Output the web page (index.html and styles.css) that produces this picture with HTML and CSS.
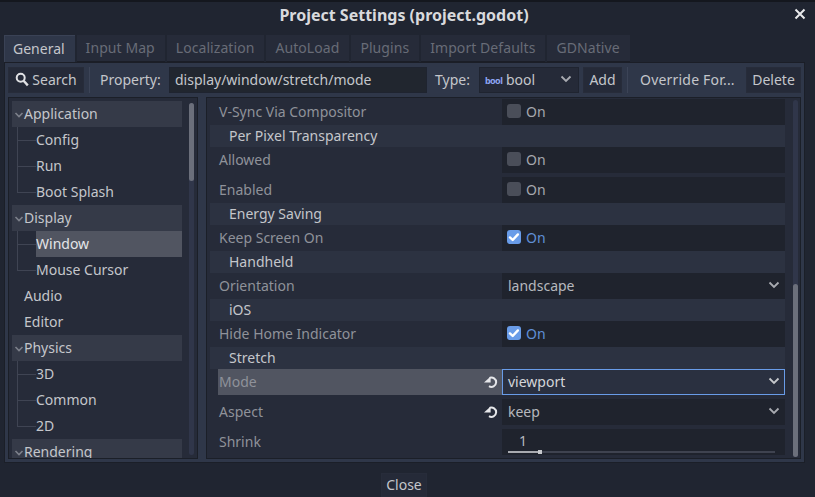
FILE: index.html
```html
<!DOCTYPE html>
<html lang="en">
<head>
<meta charset="utf-8">
<title>Project Settings</title>
<link rel="stylesheet" href="styles.css">
</head>
<body>
<div class="window">
  <header class="titlebar">
    <span class="title">Project Settings (project.godot)</span>
    <svg class="close-x" width="12" height="12" viewBox="0 0 12 12"><path d="M1.5 1.5l9 9M10.5 1.5l-9 9" stroke="#e8e9eb" stroke-width="2" fill="none"/></svg>
  </header>
  <nav class="tabs">
    <span class="tab active">General</span>
    <span class="tab">Input Map</span>
    <span class="tab">Localization</span>
    <span class="tab">AutoLoad</span>
    <span class="tab">Plugins</span>
    <span class="tab">Import Defaults</span>
    <span class="tab">GDNative</span>
  </nav>
  <main class="panel">
    <div class="toolbar">
      <button class="btn btn-search">
        <svg width="14" height="15" viewBox="0 0 14 15"><circle cx="5.7" cy="5.7" r="4" stroke="#e0e1e4" stroke-width="2" fill="none"/><path d="M8.6 8.8l4.2 4.6" stroke="#e0e1e4" stroke-width="2.4" fill="none"/></svg>
        <span>Search</span>
      </button>
      <span class="sep sep-a"></span>
      <label class="lbl lbl-prop">Property:</label>
      <span class="field field-prop">display/window/stretch/mode</span>
      <label class="lbl lbl-type">Type:</label>
      <span class="field field-type">
        <span class="bool-icon">bool</span>
        <span class="type-text">bool</span>
        <svg class="chev" width="12" height="8" viewBox="0 0 12 8"><path d="M1.5 1.5L6 6l4.5-4.5" stroke="#a9abb1" stroke-width="1.8" fill="none"/></svg>
      </span>
      <button class="btn btn-add">Add</button>
      <span class="sep sep-b"></span>
      <span class="lbl lbl-override">Override For...</span>
      <button class="btn btn-delete">Delete</button>
    </div>
    <div class="content">
      <aside class="tree">
        <div class="tree-items">
          <div class="t-head"><svg class="t-arrow" width="10" height="6" viewBox="0 0 10 6"><path d="M1.5 1L5 4.5 8.5 1" stroke="#7d818b" stroke-width="1.6" fill="none"/></svg>Application</div>
          <div class="t-kids">
            <div class="t-kid">Config</div>
            <div class="t-kid">Run</div>
            <div class="t-kid">Boot Splash</div>
          </div>
          <div class="t-head"><svg class="t-arrow" width="10" height="6" viewBox="0 0 10 6"><path d="M1.5 1L5 4.5 8.5 1" stroke="#7d818b" stroke-width="1.6" fill="none"/></svg>Display</div>
          <div class="t-kids">
            <div class="t-kid selected">Window</div>
            <div class="t-kid">Mouse Cursor</div>
          </div>
          <div class="t-leaf">Audio</div>
          <div class="t-leaf">Editor</div>
          <div class="t-head"><svg class="t-arrow" width="10" height="6" viewBox="0 0 10 6"><path d="M1.5 1L5 4.5 8.5 1" stroke="#7d818b" stroke-width="1.6" fill="none"/></svg>Physics</div>
          <div class="t-kids">
            <div class="t-kid">3D</div>
            <div class="t-kid">Common</div>
            <div class="t-kid">2D</div>
          </div>
          <div class="t-head"><svg class="t-arrow" width="10" height="6" viewBox="0 0 10 6"><path d="M1.5 1L5 4.5 8.5 1" stroke="#7d818b" stroke-width="1.6" fill="none"/></svg>Rendering</div>
        </div>
        <div class="vbar vbar-tree"><div class="grab grab-tree"></div></div>
      </aside>
      <section class="props">
        <div class="prop-list">
          <div class="row"><span class="name">V-Sync Via Compositor</span><div class="val check"><span class="box"></span><span>On</span></div></div>
          <div class="sect">Per Pixel Transparency</div>
          <div class="row"><span class="name">Allowed</span><div class="val check"><span class="box"></span><span>On</span></div></div>
          <div class="row gap"><span class="name">Enabled</span><div class="val check"><span class="box"></span><span>On</span></div></div>
          <div class="sect">Energy Saving</div>
          <div class="row"><span class="name">Keep Screen On</span><div class="val check on"><span class="box"><svg width="14" height="14" viewBox="0 0 14 14"><path d="M3 7.4l2.7 2.6 5.2-5.6" stroke="#fff" stroke-width="2.4" fill="none" stroke-linecap="round" stroke-linejoin="round"/></svg></span><span>On</span></div></div>
          <div class="sect">Handheld</div>
          <div class="row"><span class="name">Orientation</span><div class="val select"><span>landscape</span><svg class="chev" width="12" height="8" viewBox="0 0 12 8"><path d="M1.5 1.5L6 6l4.5-4.5" stroke="#a9abb1" stroke-width="1.8" fill="none"/></svg></div></div>
          <div class="sect">iOS</div>
          <div class="row"><span class="name">Hide Home Indicator</span><div class="val check on"><span class="box"><svg width="14" height="14" viewBox="0 0 14 14"><path d="M3 7.4l2.7 2.6 5.2-5.6" stroke="#fff" stroke-width="2.4" fill="none" stroke-linecap="round" stroke-linejoin="round"/></svg></span><span>On</span></div></div>
          <div class="sect">Stretch</div>
          <div class="row hover"><span class="name">Mode</span>
            <svg class="revert" width="14" height="12" viewBox="0 0 14 12"><path d="M5.5 1.9A4.7 4.7 0 1 1 5 10.2" stroke="#e6e7ea" stroke-width="2" fill="none"/><path d="M0 6.6h6.6V.4z" fill="#e6e7ea"/></svg>
            <div class="val select focus"><span>viewport</span><svg class="chev" width="12" height="8" viewBox="0 0 12 8"><path d="M1.5 1.5L6 6l4.5-4.5" stroke="#c6c8cc" stroke-width="1.8" fill="none"/></svg></div></div>
          <div class="row gap"><span class="name">Aspect</span>
            <svg class="revert" width="14" height="12" viewBox="0 0 14 12"><path d="M5.5 1.9A4.7 4.7 0 1 1 5 10.2" stroke="#e6e7ea" stroke-width="2" fill="none"/><path d="M0 6.6h6.6V.4z" fill="#e6e7ea"/></svg>
            <div class="val select"><span>keep</span><svg class="chev" width="12" height="8" viewBox="0 0 12 8"><path d="M1.5 1.5L6 6l4.5-4.5" stroke="#a9abb1" stroke-width="1.8" fill="none"/></svg></div></div>
          <div class="row gap"><span class="name">Shrink</span><div class="val range"><span class="range-num">1</span><div class="track"><div class="fill"></div><div class="knob"></div></div></div></div>
        </div>
        <div class="vbar vbar-props"><div class="grab grab-props"></div></div>
      </section>
    </div>
  </main>
  <footer class="footer"><button class="btn btn-close">Close</button></footer>
</div>
</body>
</html>
```
FILE: styles.css
```css
* { box-sizing: border-box; }
html, body { margin: 0; padding: 0; }
body {
  width: 815px; height: 497px; overflow: hidden;
  background: #202531;
  font-family: "Noto Sans", sans-serif; font-size: 14px; color: #c4c6cb;
}
.window { height: 497px; display: flex; flex-direction: column; border-top: 2px solid #14171e; }
button { font: inherit; color: inherit; border: 0; padding: 0; }

.titlebar { height: 33px; flex: none; display: flex; align-items: center; justify-content: center; position: relative; padding: 0 7px 8px 0; }
.title { font-weight: 700; font-size: 16px; color: #d9dadd; }
.close-x { position: absolute; left: 794px; top: 6px; }

.tabs { flex: none; height: 27px; display: flex; margin-left: 4px; gap: 2px; }
.tab { padding: 0 10px 0 9px; line-height: 25px; background: #262b39; color: #686c77; border-bottom: 1px solid #1b1e27; letter-spacing: 0.07px; }
.tab.active { background: #2f3749; color: #c4c6cb; border-bottom: 0; border-top: 1px solid #3a4255; border-left: 1px solid #3a4255; padding-left: 8px; letter-spacing: 0; }

.panel { flex: none; height: 401px; width: 801px; margin-left: 4px; padding: 4px 3px 3px; background: #2f3749; border: 1px solid #1b1f28; border-top-color: #1b1e27; }

.toolbar { height: 26px; display: flex; align-items: center; }
.btn { background: #252a38; height: 26px; display: inline-flex; align-items: center; justify-content: center; border: 1px solid #272c3a; color: #c4c6cb; padding-bottom: 2px; }
.btn-search { width: 76px; gap: 3px; }
.sep { width: 1px; height: 26px; background: #3c4457; flex: none; }
.sep-a { margin-left: 5px; }
.lbl { color: #c4c6cb; white-space: nowrap; padding-bottom: 2px; }
.lbl-prop { margin-left: 10px; width: 69px; }
.field { height: 26px; background: #21262f; display: flex; align-items: center; border: 1px solid #1f2430; padding-bottom: 2px; }
.field-prop { width: 258px; padding-left: 5px; }
.lbl-type { margin-left: 8px; width: 44px; }
.field-type { width: 100px; padding-left: 5px; position: relative; background: #252a38; }
.bool-icon { font-size: 9px; font-weight: 700; letter-spacing: -0.6px; color: #8da5f3; width: 17px; margin-top: 2px; }
.type-text { margin-left: 4px; }
.field-type .chev { margin-left: auto; margin-right: 6px; }
.btn-add { width: 39px; margin-left: 4px; }
.sep-b { margin-left: 5px; }
.lbl-override { margin-left: 12px; width: 106px; letter-spacing: 0.2px; }
.btn-delete { width: 55px; }

.content { height: 362px; margin-top: 4px; display: flex; gap: 8px; }

.tree { width: 190px; flex: none; background: #262b39; border: 1px solid #1b1f28; padding: 3px 4px 0 3px; display: flex; overflow: hidden; position: relative; }
.tree-items { width: 170px; height: 358px; overflow: hidden; flex: none; }
.t-head { height: 26px; line-height: 25px; background: #353a48; padding-left: 12px; position: relative; }
.t-arrow { position: absolute; left: 2px; top: 11px; }
.t-leaf { height: 26px; line-height: 25px; padding-left: 12px; }
.t-kids { position: relative; }
.t-kids::before { content: ""; position: absolute; left: 5px; top: 0; bottom: 13px; width: 1px; background: #3f4453; }
.t-kid { height: 26px; line-height: 25px; margin-left: 24px; position: relative; }
.t-kid::before { content: ""; position: absolute; left: -19px; top: 13px; width: 19px; height: 1px; background: #3f4453; }
.t-kid.selected { background: #515561; color: #e4e5e8; }

.vbar { flex: none; width: 5px; border-radius: 3px; background: #30364a; position: relative; }
.vbar-tree { margin-left: 7px; height: 352px; margin-top: 2px; }
.grab { position: absolute; left: 0; width: 5px; border-radius: 3px; background: #6b6f7b; }
.grab-tree { top: 0; height: 78px; }

.props { flex: 1; background: #262b39; border: 1px solid #1b1f28; padding: 1px 0 0 3px; display: flex; overflow: hidden; }
.prop-list { width: 575px; flex: none; }
.row { height: 26px; margin-left: 8px; display: flex; align-items: center; position: relative; }
.row.gap { margin-top: 4px; }
.row.hover { background: #515561; }
.name { flex: 1; padding-left: 1px; padding-bottom: 2px; color: #8f929a; }
.sect { height: 22px; line-height: 21px; background: #2c3241; padding-left: 19px; color: #c4c6cb; }
.val { width: 283px; height: 26px; flex: none; background: #1f232d; display: flex; align-items: center; padding-bottom: 2px; }
.revert { margin-right: 4px; margin-bottom: 1px; }
.check { padding-left: 5px; color: #a6a8ae; }
.box { width: 14px; height: 14px; border-radius: 3px; background: #4a4e59; margin-right: 5px; display: block; }
.box svg { display: block; }
.check.on .box { background: #699ce8; }
.check.on { color: #5f8fd6; }
.select { padding: 0 5px 2px 6px; justify-content: space-between; color: #b6b8bd; }
.select.focus { background: #2a3040; border: 1px solid #699ce8; padding: 0 4px 2px 5px; color: #d4d5d9; }
.range { display: block; position: relative; padding: 0; }
.range-num { position: absolute; left: 17px; top: 2px; color: #b6b8bd; }
.track { position: absolute; left: 6px; right: 10px; bottom: 2px; height: 2px; background: #3f4350; }
.fill { position: absolute; left: 0; top: 0; width: 33px; height: 2px; background: #a8aab0; }
.knob { position: absolute; left: 30px; top: -1px; width: 4px; height: 4px; background: #c6c8cc; }

.vbar-props { margin-left: 8px; height: 357px; margin-top: 1px; background: #30364a; }
.grab-props { top: 184px; height: 173px; }

.footer { flex: none; display: flex; justify-content: center; margin-top: 10px; }
.btn-close { width: 46px; height: 24px; margin-left: -7px; position: relative; }
```
